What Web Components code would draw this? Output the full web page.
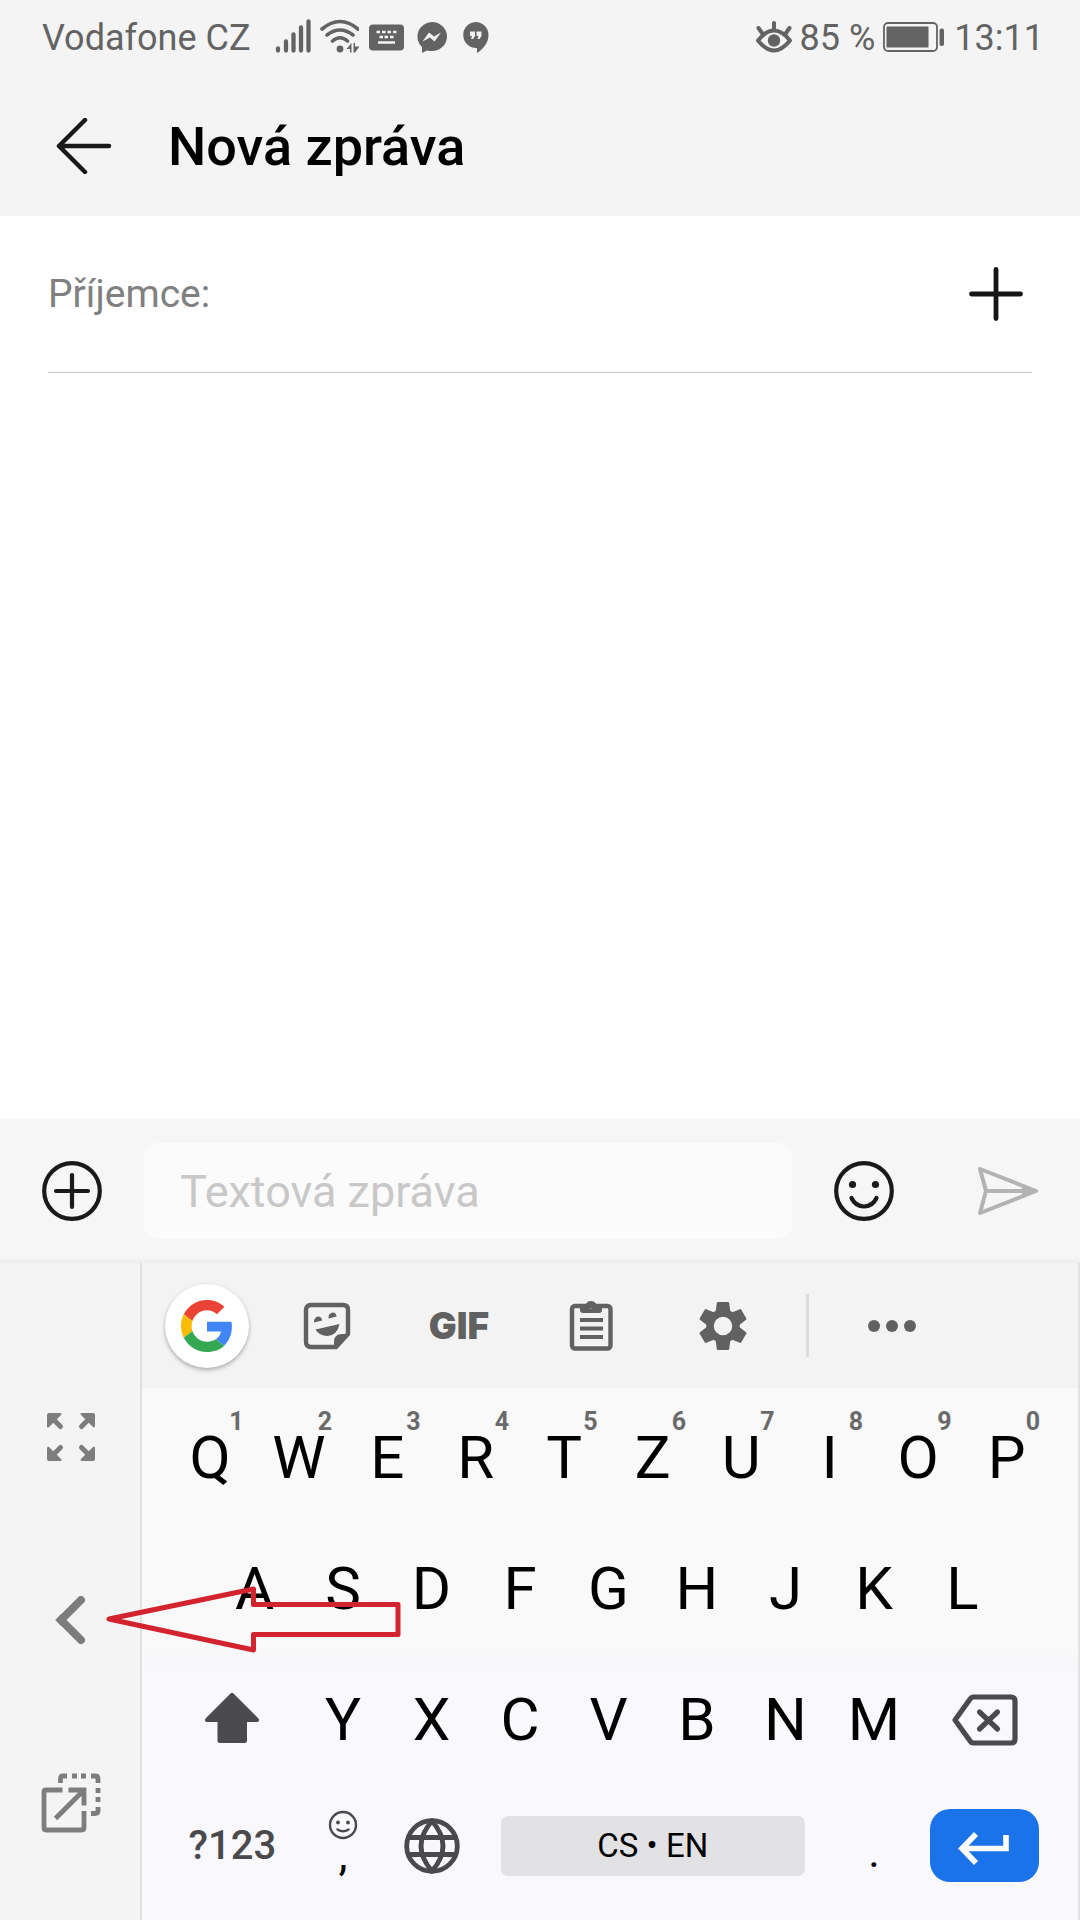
<!DOCTYPE html>
<html lang="cs">
<head>
<meta charset="utf-8">
<meta name="viewport" content="width=device-width, initial-scale=1">
<title>Nová zpráva</title>
<style>
   body {
      margin: 0;
      min-height: 100vh;
      display: flex;
      flex-direction: column;
      background: #fff;
      color: #000;
      font-family: Roboto, 'Liberation Sans', sans-serif;
   }
   main {
      flex: 1;
   }
</style>
</head>
<body>
   <status-bar carrier="Vodafone CZ" battery="85 %" time="13:11"></status-bar>
   <page-header>Nová zpráva</page-header>
   <main>
      <recipient-field>Příjemce:</recipient-field>
   </main>
   <message-composer placeholder="Textová zpráva"></message-composer>
   <soft-keyboard></soft-keyboard>

<script>
/**
 * Inline SVG drawings, looked up by name by <ui-icon>.
 */
const icons = {
   signal: [40, 40, `<g stroke="currentColor" stroke-width="4.300" stroke-linecap="round">
      <path d="M5 30.500V32.500M13 23.500V32.500M20.500 16.500V32.500M28 9.500V32.500M35.500 3.500V32.500"/></g>`],
   wifi: [40, 40, `<g fill="none" stroke="currentColor" stroke-width="3.600" stroke-linecap="round">
      <path d="M3 11Q21 -4 39 11M8 17Q21 7 34 17M13.500 23Q21 16.500 28.500 23"/></g>
      <circle cx="21" cy="31" r="3.400"/><path d="M27.500 31L32.500 25V34.500H31V31ZM34.500 25H36V28.500H40.500L36 34.500H34.500Z"/>`],
   keyboard: [40, 40, `<rect x="4" y="6.500" width="35" height="26" rx="4"/>
      <path stroke="#f4f4f4" stroke-width="2.400" d="M11.500 14h3.500M17 14h3.500M22.500 14h3.500M28 14h3.500M14.500 19h3.500M19.500 19h3.500M25 19h3.500M13 24.500h17"/>`],
   messenger: [40, 40, `<path d="M21 4a15 14.500 0 0 1 0 29q-3 0-5-.5L11 35V29A15 14.500 0 0 1 21 4Z"/>
      <path fill="#f4f4f4" d="M11.500 23.500L18 14.500L23 18.500L30 14.500L23.500 23.500L19 19.500Z"/>`],
   hangouts: [40, 40, `<path d="M18.500 4a13 13 0 0 1 13 13C31.500 25 26 31 20 35V30A13 13 0 0 1 18.500 4Z"/>
      <path fill="#f4f4f4" d="M13 13.500h5v4.500l-2 3h-2l1-3h-2ZM19.500 13.500h5v4.500l-2 3h-2l1-3h-2Z"/>`],
   eye: [40, 40, `<path fill="none" stroke="currentColor" stroke-width="4" stroke-linecap="round" stroke-linejoin="round"
      d="M4 22.500Q20 2.500 36 22.500Q20 42.500 4 22.500ZM20 5V11M4.500 10L8 15M35.500 10L32 15"/><circle cx="20" cy="22.500" r="6.200"/>`],
   battery: [64, 40, `<rect x="3" y="5" width="53" height="28" rx="4" fill="none" stroke="currentColor" stroke-width="1.800"/>
      <rect x="5.500" y="8.500" width="42" height="21"/><rect x="58.500" y="10.500" width="4.500" height="17.500" rx="2"/>`],
   back: [56, 56, `<path fill="none" stroke="currentColor" stroke-width="4.500" stroke-linecap="round" stroke-linejoin="round" d="M29 2L3 28L29 54M3 28H53"/>`],
   plus: [56, 56, `<path stroke="currentColor" stroke-width="4.800" stroke-linecap="round" d="M28 3.500V52.500M3.500 28H52.500"/>`],
   plusCircle: [60, 60, `<g fill="none" stroke="currentColor" stroke-width="4.200" stroke-linecap="round">
      <circle cx="30" cy="30" r="27.800"/><path d="M30 14V46M14 30H46"/></g>`],
   smile: [60, 60, `<g fill="none" stroke="currentColor" stroke-width="4.200" stroke-linecap="round">
      <circle cx="30" cy="30" r="27.800"/><path d="M17.500 37Q21.500 45.500 30 45.500T42.500 37"/></g>
      <circle cx="18.500" cy="23.500" r="3.600"/><circle cx="41.500" cy="23.500" r="3.600"/>`],
   send: [60, 60, `<path fill="none" stroke="currentColor" stroke-width="4" stroke-linejoin="round" d="M2 8L58 30L2 52L8 30ZM8 30H58"/>
      <path d="M44 26L58 30L44 34Z"/>`],
   google: [48, 48, `<path fill="#ea4335" d="M24 9.5c3.54 0 6.71 1.22 9.21 3.6l6.85-6.85C35.9 2.38 30.47 0 24 0 14.62 0 6.51 5.38 2.56 13.22l7.98 6.19C12.43 13.72 17.74 9.5 24 9.5z"/>
      <path fill="#4285f4" d="M46.98 24.55c0-1.57-.15-3.09-.38-4.55H24v9.02h12.94c-.58 2.96-2.26 5.48-4.78 7.18l7.73 6c4.51-4.18 7.09-10.36 7.09-17.65z"/>
      <path fill="#fbbc05" d="M10.53 28.59c-.48-1.45-.76-2.99-.76-4.59s.27-3.14.76-4.59l-7.98-6.19C.92 16.46 0 20.12 0 24c0 3.88.92 7.54 2.56 10.78l7.97-6.19z"/>
      <path fill="#34a853" d="M24 48c6.48 0 11.93-2.13 15.89-5.81l-7.73-6c-2.15 1.45-4.92 2.3-8.16 2.3-6.26 0-11.57-4.22-13.47-9.91l-7.98 6.19C6.51 42.62 14.62 48 24 48z"/>`],
   sticker: [48, 48, `<path fill="none" stroke="currentColor" stroke-width="4.400" d="M8 3H40Q45 3 45 8V32L33 45H8Q3 45 3 40V8Q3 3 8 3Z"/>
      <path d="M31 45V40Q31 32 39 32H45ZM11 20.500a4.200 5.500 0 0 1 8.200-2ZM25.500 16.500a4.200 5.500 0 0 1 8.200-2ZM12.500 27.500L36.500 22Q34.500 33 24.500 34Q16 34 12.500 27.500Z"/>`],
   clipboard: [48, 56, `<rect x="5" y="8" width="38.500" height="42.500" rx="3" fill="none" stroke="currentColor" stroke-width="4.400"/>
      <path fill-rule="evenodd" d="M13 7H18.500A5.800 5.800 0 0 1 29.500 7H35V12Q35 15 32 15H16Q13 15 13 12ZM24 6a2.300 2.300 0 1 0 .1 0Z"/>
      <path stroke="currentColor" stroke-width="4.200" d="M13 22H36M13 30.500H36M13 39H36"/>`],
   gear: [48, 48, `<g transform="translate(24 24)"><circle r="13" fill="none" stroke="currentColor" stroke-width="7.500"/>
      ${[0, 60, 120, 180, 240, 300].map(a => `<path transform="rotate(${a})" d="M-5 -24H5Q6 -24 6.200 -23L7.500 -13H-7.500L-6.200 -23Q-6 -24 -5 -24Z"/>`).join('')}</g>`],
   more: [48, 48, `<circle cx="6" cy="24" r="6"/><circle cx="24" cy="24" r="6"/><circle cx="42" cy="24" r="6"/>`],
   expand: [48, 48, `<g transform="translate(24 24)">
      ${[0, 90, 180, 270].map(a => `<path transform="rotate(${a})" stroke="currentColor" stroke-width="5" stroke-linecap="round" d="M-17 -17L-10.500 -10.500"/>
      <path transform="rotate(${a})" d="M-22 -24H-11Q-8.500 -23.500 -10 -22L-22 -10Q-24 -8.500 -24 -11V-22Q-24 -24 -22 -24Z"/>`).join('')}</g>`],
   chevron: [48, 48, `<path fill="none" stroke="currentColor" stroke-width="8" stroke-linecap="round" d="M34 4L14 24L34 44"/>
      <path d="M8.500 24L14 18V30Z"/>`],
   popOut: [60, 60, `<g fill="none" stroke="currentColor" stroke-width="4.800">
      <path d="M21.500 17H5Q3 17 3 19V54.500Q3 57 5 57H40.500Q43 57 43 54.500V38M27.500 17H43V32.500M14.500 45.500L42 18"/>
      <path d="M19.500 10V6Q19.500 3 22 3H26M31 3h5M40 3h5M50 3h4Q57 3 57 6V10M57 15v5M57 24v5M57 34V38Q57 40.500 54 40.500H50"/></g>`],
   shift: [56, 56, `<path d="M26.500 1.500Q28 0 29.500 1.500L54.500 26.500Q56 30 53 30H43V48.500Q43 51 40.500 51H16Q13.500 51 13.500 48.500V30H3Q0 30 1.500 26.500Z"/>`],
   backspace: [68, 56, `<g fill="none" stroke="currentColor" stroke-width="5.200" stroke-linejoin="round" stroke-linecap="round">
      <path d="M22 5H60Q64 5 64 9V47Q64 51 60 51H22Q20.500 51 19.500 49.500L4 28L19.500 6.500Q20.500 5 22 5Z"/><path d="M28.500 20L46.500 37M46.500 20L28.500 37"/></g>`],
   smallSmile: [30, 30, `<g fill="none" stroke="currentColor" stroke-width="2.400" stroke-linecap="round">
      <circle cx="15" cy="15" r="13"/><path d="M9.500 19.500Q15 23 20.500 19.500"/></g><circle cx="10" cy="12.500" r="1.900"/><circle cx="20" cy="12.500" r="1.900"/>`],
   globe: [56, 56, `<g fill="none" stroke="currentColor" stroke-width="4.800">
      <circle cx="28" cy="28" r="25.300"/><path d="M28 3Q6 28 28 53Q50 28 28 3ZM5 19.500H51M5 36.500H51"/></g>`],
   enter: [56, 40, `<path fill="none" stroke="currentColor" stroke-width="5.600" d="M19 8L5 22.500L19 37M5 22.500H49V9"/>`],
};

class UiIcon extends HTMLElement {
   connectedCallback() {
      const [width, height, shapes] = icons[this.getAttribute('name')];
      const scale = (this.getAttribute('height') || height) / height;
      this.attachShadow({mode: 'open'});
      this.shadowRoot.innerHTML = `
         <style>
         :host {
            display: block;
            flex: none;
         }
         svg {
            display: block;
            fill: currentColor;
         }
         </style>
         <svg viewBox="0 0 ${width} ${height}" width="${width * scale}" height="${height * scale}" aria-hidden="true">${shapes}</svg>
         `;
   }
}

class StatusBar extends HTMLElement {
   connectedCallback() {
      this.attachShadow({mode: 'open'});
      this.shadowRoot.innerHTML = `
         <style>
         :host {
            display: flex;
            justify-content: space-between;
            align-items: center;
            height: 76px;
            padding: 0 36px 0 42px;
            background: #f4f4f4;
            color: #636363;
            font-size: 36px;
         }
         div {
            display: flex;
            align-items: center;
            gap: 6px;
         }
         .carrier {
            margin-right: 17px;
         }
         time {
            margin-left: 3px;
         }
         </style>
         <div>
            <span class="carrier">${this.getAttribute('carrier')}</span>
            <ui-icon name="signal"></ui-icon>
            <ui-icon name="wifi"></ui-icon>
            <ui-icon name="keyboard"></ui-icon>
            <ui-icon name="messenger"></ui-icon>
            <ui-icon name="hangouts"></ui-icon>
         </div>
         <div>
            <ui-icon name="eye"></ui-icon>
            <span>${this.getAttribute('battery')}</span>
            <ui-icon name="battery"></ui-icon>
            <time>${this.getAttribute('time')}</time>
         </div>
         `;
   }
}

// Shared reset for the buttons in every shadow root.
const buttonStyle = `
   button {
      display: flex;
      align-items: center;
      justify-content: center;
      margin: 0;
      padding: 0;
      border: 0;
      background: none;
      color: inherit;
      font: inherit;
      cursor: pointer;
   }
`;

class PageHeader extends HTMLElement {
   constructor() {
      super();

      this.attachShadow({mode: 'open'});
      this.shadowRoot.innerHTML = `
         <style>
         ${buttonStyle}
         :host {
            display: flex;
            align-items: center;
            gap: 56px;
            height: 140px;
            padding: 0 56px;
            background: #f4f4f4;
         }
         button {
            color: #1a1a1a;
         }
         h1 {
            margin: 0;
            font-size: 54px;
            font-weight: 500;
         }
         </style>
         <button type="button" aria-label="Zpět"><ui-icon name="back"></ui-icon></button>
         <h1><slot></slot></h1>
         `;
   }
}

class RecipientField extends HTMLElement {
   constructor() {
      super();

      this.attachShadow({mode: 'open'});
      this.shadowRoot.innerHTML = `
         <style>
         ${buttonStyle}
         :host {
            display: flex;
            align-items: center;
            height: 156px;
            margin: 0 48px;
            border-bottom: 1px solid #c8c8c8;
            font-size: 39px;
         }
         label {
            color: #808080;
         }
         input {
            flex: 1;
            min-width: 0;
            margin-left: 12px;
            border: 0;
            outline: 0;
            background: none;
            font: inherit;
         }
         button {
            width: 72px;
            color: #161616;
         }
         </style>
         <label for="recipient"><slot></slot></label>
         <input id="recipient" type="text">
         <button type="button" aria-label="Přidat příjemce"><ui-icon name="plus"></ui-icon></button>
         `;
   }
}

class MessageComposer extends HTMLElement {
   connectedCallback() {
      const text = this.getAttribute('placeholder');
      this.attachShadow({mode: 'open'});
      this.shadowRoot.innerHTML = `
         <style>
         ${buttonStyle}
         :host {
            display: flex;
            align-items: center;
            height: 144px;
            background: linear-gradient(#f6f6f6 96%, #ededed);
            color: #1a1a1a;
         }
         button {
            width: 144px;
            height: 100%;
         }
         button:disabled {
            color: #b3b3b3;
         }
         input {
            flex: 1;
            min-width: 0;
            box-sizing: border-box;
            height: 96px;
            padding: 0 36px;
            border: 0;
            border-radius: 14px;
            outline: 0;
            background: #fbfbfb;
            font: 45px Roboto, 'Liberation Sans', sans-serif;
         }
         input::placeholder {
            color: #c8c8c8;
         }
         </style>
         <button type="button" aria-label="Přidat přílohu"><ui-icon name="plusCircle"></ui-icon></button>
         <input type="text" placeholder="${text}" aria-label="${text}">
         <button type="button" aria-label="Emotikony"><ui-icon name="smile"></ui-icon></button>
         <button type="button" aria-label="Odeslat" disabled><ui-icon name="send"></ui-icon></button>
         `;
   }
}

class KeyboardRail extends HTMLElement {
   constructor() {
      super();

      this.attachShadow({mode: 'open'});
      this.shadowRoot.innerHTML = `
         <style>
         ${buttonStyle}
         :host {
            display: block;
            box-sizing: border-box;
            width: 142px;
            padding: 82px 0 0 2px;
            border-right: 2px solid #e0e0e0;
            background: #f4f4f4;
            color: #7d7d7d;
         }
         button {
            width: 100%;
            height: 183px;
         }
         </style>
         <button type="button" aria-label="Celá šířka"><ui-icon name="expand"></ui-icon></button>
         <button type="button" aria-label="Přesunout doleva"><ui-icon name="chevron"></ui-icon></button>
         <button type="button" aria-label="Plovoucí klávesnice"><ui-icon name="popOut"></ui-icon></button>
         `;
   }
}

class KeyboardToolbar extends HTMLElement {
   constructor() {
      super();

      this.attachShadow({mode: 'open'});
      this.shadowRoot.innerHTML = `
         <style>
         ${buttonStyle}
         :host {
            display: flex;
            align-items: center;
            height: 125px;
            padding-left: 23px;
            background: #f3f3f3;
            color: #616161;
         }
         button {
            width: 132px;
            height: 100%;
         }
         .search {
            width: 84px;
            height: 84px;
            margin-right: 12px;
            border-radius: 50%;
            background: #fff;
            box-shadow: 0 2px 4px rgba(0, 0, 0, 0.3);
         }
         .gif {
            font-family: Inter, Roboto, sans-serif;
            font-size: 37px;
            font-weight: 900;
         }
         .divider {
            width: 3px;
            height: 63px;
            margin: 0 17px;
            background: #dcdcdc;
         }
         </style>
         <button type="button" class="search" aria-label="Google"><ui-icon name="google" height="52"></ui-icon></button>
         <button type="button" aria-label="Nálepky"><ui-icon name="sticker"></ui-icon></button>
         <button type="button" class="gif">GIF</button>
         <button type="button" aria-label="Schránka"><ui-icon name="clipboard"></ui-icon></button>
         <button type="button" aria-label="Nastavení"><ui-icon name="gear"></ui-icon></button>
         <span class="divider"></span>
         <button type="button" aria-label="Další"><ui-icon name="more"></ui-icon></button>
         `;
   }
}

/**
 * One key. "hint" is the long-press digit, "kind" picks a variant.
 */
class KeyboardKey extends HTMLElement {
   connectedCallback() {
      const hint = this.getAttribute('hint');
      const label = this.getAttribute('label');
      this.attachShadow({mode: 'open'});
      this.shadowRoot.innerHTML = `
         <style>
         ${buttonStyle}
         :host {
            display: flex;
            align-items: center;
            justify-content: center;
            position: relative;
            grid-column: span 2;
            font-size: 60px;
         }
         button {
            width: 100%;
            height: 100%;
         }
         .hint {
            position: absolute;
            top: 15px;
            right: 11px;
            color: #6a6a6a;
            font-size: 25px;
            font-weight: 700;
            line-height: 30px;
         }
         :host([kind='wide']), :host([kind='enter']) {
            grid-column: span 3;
            color: #4a4a4d;
            font-size: 40px;
            font-weight: 500;
         }
         :host([kind='icon']) {
            color: #4a4a4d;
         }
         :host([kind='comma']), :host([kind='period']) {
            font-size: 44px;
            line-height: 30px;
         }
         :host([kind='comma']) button {
            flex-direction: column;
            box-sizing: border-box;
            padding-bottom: 12px;
         }
         :host([kind='comma']) ::slotted(ui-icon) {
            color: #4a4a4d;
         }
         :host([kind='period']) button {
            box-sizing: border-box;
            padding-top: 12px;
         }
         :host([kind='space']) {
            grid-column: span 8;
            font-size: 33px;
         }
         :host([kind='space']) button {
            height: 60px;
            margin: 0 25px;
            border-radius: 7px;
            background: #e2e2e4;
         }
         :host([kind='enter']) button {
            height: 73px;
            margin: 0 12px;
            border-radius: 20px;
            background: #1a73e8;
            color: #fff;
         }
         </style>
         <button type="button" ${label ? `aria-label="${label}"` : ''}><slot></slot></button>
         ${hint ? `<span class="hint">${hint}</span>` : ''}
         `;
   }
}

class KeyboardKeys extends HTMLElement {
   constructor() {
      super();

      const letters = (row) => [...row].map(c => `<keyboard-key>${c}</keyboard-key>`).join('');
      const topRow = [...'QWERTZUIOP'].map((c, i) => `<keyboard-key hint="${(i + 1) % 10}">${c}</keyboard-key>`).join('');

      this.attachShadow({mode: 'open'});
      // Half-key columns: a letter takes two, shift and enter take three.
      this.shadowRoot.innerHTML = `
         <style>
         :host {
            display: grid;
            grid-template-columns: repeat(20, 1fr);
            grid-template-rows: repeat(3, 131px) 121px;
            padding: 4px 27px 14px 24px;
            background: linear-gradient(#f9f9f9 48%, #f8f8fd 54%);
         }
         </style>
         ${topRow}
         <span></span>${letters('ASDFGHJKL')}<span></span>
         <keyboard-key kind="wide" label="Shift"><ui-icon name="shift"></ui-icon></keyboard-key>
         ${letters('YXCVBNM')}
         <keyboard-key kind="wide" label="Smazat"><ui-icon name="backspace"></ui-icon></keyboard-key>
         <keyboard-key kind="wide">?123</keyboard-key>
         <keyboard-key kind="comma"><ui-icon name="smallSmile"></ui-icon><span>,</span></keyboard-key>
         <keyboard-key kind="icon" label="Změnit jazyk"><ui-icon name="globe"></ui-icon></keyboard-key>
         <keyboard-key kind="space">CS • EN</keyboard-key>
         <keyboard-key kind="period">.</keyboard-key>
         <keyboard-key kind="enter" label="Enter"><ui-icon name="enter"></ui-icon></keyboard-key>
         `;
   }
}

class SoftKeyboard extends HTMLElement {
   constructor() {
      super();

      this.attachShadow({mode: 'open'});
      this.shadowRoot.innerHTML = `
         <style>
         :host {
            display: flex;
            position: relative;
         }
         .panel {
            flex: 1;
            border-right: 2px solid #e2e2e2;
         }
         /* red arrow laid over the keys, pointing at the chevron */
         .pointer {
            position: absolute;
            top: 320px;
            left: 104px;
            pointer-events: none;
         }
         </style>
         <keyboard-rail></keyboard-rail>
         <div class="panel">
            <keyboard-toolbar></keyboard-toolbar>
            <keyboard-keys></keyboard-keys>
         </div>
         <svg class="pointer" width="300" height="72" viewBox="0 0 300 72" aria-hidden="true">
            <path fill="none" stroke="#d2232f" stroke-width="5" stroke-linejoin="round"
               d="M5 36L149.500 6V21.500H294V51.500H149.500V67Z"/>
         </svg>
         `;
   }
}

customElements.define('ui-icon', UiIcon);
customElements.define('status-bar', StatusBar);
customElements.define('page-header', PageHeader);
customElements.define('recipient-field', RecipientField);
customElements.define('message-composer', MessageComposer);
customElements.define('keyboard-rail', KeyboardRail);
customElements.define('keyboard-toolbar', KeyboardToolbar);
customElements.define('keyboard-key', KeyboardKey);
customElements.define('keyboard-keys', KeyboardKeys);
customElements.define('soft-keyboard', SoftKeyboard);
</script>
</body>
</html>
